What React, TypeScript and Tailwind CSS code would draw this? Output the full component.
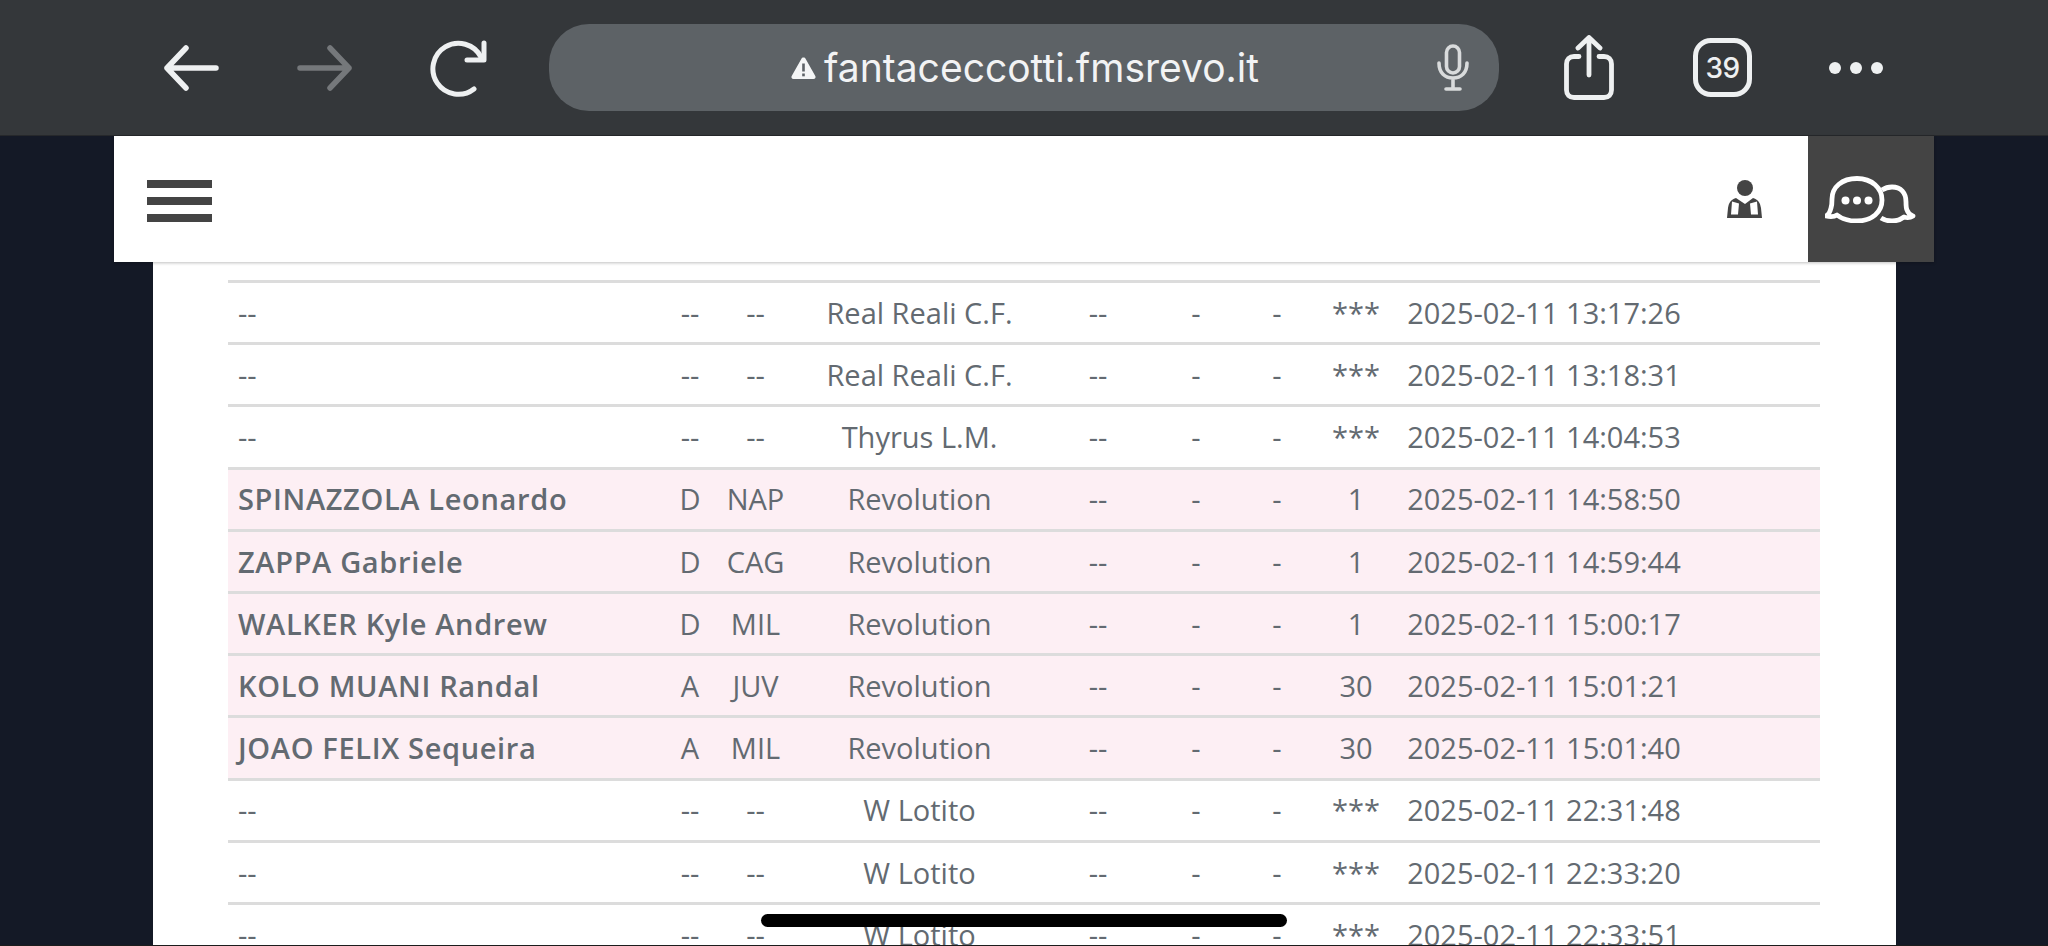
import React from "react";

const rows = [
  { name: "--", r: "--", club: "--", team: "Real Reali C.F.", cost: "***", at: "2025-02-11 13:17:26" },
  { name: "--", r: "--", club: "--", team: "Real Reali C.F.", cost: "***", at: "2025-02-11 13:18:31" },
  { name: "--", r: "--", club: "--", team: "Thyrus L.M.", cost: "***", at: "2025-02-11 14:04:53" },
  { name: "SPINAZZOLA Leonardo", r: "D", club: "NAP", team: "Revolution", cost: "1", at: "2025-02-11 14:58:50" },
  { name: "ZAPPA Gabriele", r: "D", club: "CAG", team: "Revolution", cost: "1", at: "2025-02-11 14:59:44" },
  { name: "WALKER Kyle Andrew", r: "D", club: "MIL", team: "Revolution", cost: "1", at: "2025-02-11 15:00:17" },
  { name: "KOLO MUANI Randal", r: "A", club: "JUV", team: "Revolution", cost: "30", at: "2025-02-11 15:01:21" },
  { name: "JOAO FELIX Sequeira", r: "A", club: "MIL", team: "Revolution", cost: "30", at: "2025-02-11 15:01:40" },
  { name: "--", r: "--", club: "--", team: "W Lotito", cost: "***", at: "2025-02-11 22:31:48" },
  { name: "--", r: "--", club: "--", team: "W Lotito", cost: "***", at: "2025-02-11 22:33:20" },
  { name: "--", r: "--", club: "--", team: "W Lotito", cost: "***", at: "2025-02-11 22:33:51" },
];

function BrowserBar() {
  return (
    <div className="h-[136px] shrink-0 flex items-center bg-[#34373a] border-b border-[#26282b] font-['Inter',sans-serif] text-[#eef0f1]">
      <svg className="ml-[163px] w-[56px] h-[46px]" viewBox="0 0 56 46" fill="none" stroke="#eef0f1" strokeWidth="5.5" strokeLinecap="round" strokeLinejoin="round">
        <path d="M53 23H4M23 3 4 23l19 20" />
      </svg>
      <svg className="ml-[78px] w-[56px] h-[46px]" viewBox="0 0 56 46" fill="none" stroke="#75787b" strokeWidth="5.5" strokeLinecap="round" strokeLinejoin="round">
        <path d="M3 23h49M33 3l19 20-19 20" />
      </svg>
      <svg className="ml-[77px] w-[60px] h-[60px]" viewBox="0 0 60 60" fill="none" stroke="#eef0f1" strokeWidth="5" strokeLinecap="round" strokeLinejoin="round">
        <path d="M44 51A25.500 25.500 0 1 1 51 19" />
        <path d="M54 5v17H37" />
      </svg>
      <div className="ml-[59px] w-[950px] h-[87px] rounded-[40px] bg-[#5d6266] flex items-center relative">
        <svg className="ml-[241px] w-[27px] h-[24px]" viewBox="0 0 27 24">
          <path d="M13.5 1.5c1 0 1.7.5 2.2 1.4l9.6 17c.8 1.4-.1 3.1-1.8 3.1H3.5c-1.7 0-2.6-1.7-1.8-3.1l9.6-17c.5-.9 1.2-1.4 2.2-1.4z" fill="#f4f5f6" />
          <rect x="12.2" y="7.5" width="2.6" height="8" fill="#5d6266" />
          <rect x="12.2" y="17.5" width="2.6" height="2.8" fill="#5d6266" />
        </svg>
        <span className="ml-[7px] text-[39px] leading-none text-[#f2f3f4]">fantaceccotti.fmsrevo.it</span>
        <svg className="absolute left-[888px] top-[20px] w-[32px] h-[47px]" viewBox="0 0 32 47" fill="none" stroke="#d9dbdc" strokeWidth="3.6" strokeLinecap="round">
          <rect x="9.500" y="2" width="13" height="27" rx="6.500" />
          <path d="M2 19c0 10 6 15 14 15s14-5 14-15M16 34v11M9 45h14" />
        </svg>
      </div>
      <svg className="ml-[65px] w-[50px] h-[65px]" viewBox="0 0 50 65" fill="none" stroke="#eef0f1" strokeWidth="4.8" strokeLinecap="round" strokeLinejoin="round">
        <path d="M25 40V3M14 13 25 2.500 36 13" />
        <path d="M15 21.500H10c-4.500 0-7.500 3-7.500 7.500v26c0 4.500 3 7.500 7.500 7.500h30c4.500 0 7.500-3 7.500-7.500V29c0-4.500-3-7.500-7.500-7.500h-5" />
      </svg>
      <div className="ml-[79px] w-[59px] h-[59px] rounded-[18px] border-[5px] border-[#eef0f1] flex items-center justify-center text-[28px] font-medium tracking-[-0.5px] leading-none">
        39
      </div>
      <div className="ml-[77px] flex gap-[9px]">
        <span className="w-[12px] h-[12px] rounded-full bg-[#eef0f1]" />
        <span className="w-[12px] h-[12px] rounded-full bg-[#eef0f1]" />
        <span className="w-[12px] h-[12px] rounded-full bg-[#eef0f1]" />
      </div>
    </div>
  );
}

function SiteNav() {
  return (
    <div className="relative z-10 h-[126px] bg-white flex items-center shadow-[0_1px_3px_rgba(0,0,0,0.25)]">
      <div className="ml-[33px] mt-[3px] w-[65px] flex flex-col gap-[9px]">
        <span className="h-[8px] bg-[#444444]" />
        <span className="h-[8px] bg-[#444444]" />
        <span className="h-[8px] bg-[#444444]" />
      </div>
      <svg className="ml-auto mr-[46px] w-[35px] h-[38px] mt-[-1px]" viewBox="0 0 35 38" fill="#444444">
        <circle cx="18" cy="8" r="8" />
        <path d="M9 18c-6 2-7 5-8 10l-1 10h35l-1-10c-1-5-2-8-8-10l-8 6z" />
        <path d="M5 21.500l-1 13h7l1-11zM30 21.500l1 13h-7l-1-11z" fill="#ffffff" />
      </svg>
      <div className="w-[126px] h-full bg-[#444444] flex items-center justify-center">
        <svg className="w-[93px] h-[47px]" viewBox="0 0 93 47" fill="none" stroke="#ffffff" strokeWidth="4.8" strokeLinejoin="round">
          <path d="M57 14c3-2 7-3 10-3 9 0 14 6 14 15 0 3 0 6 1 8 1 3 3 5 6 6-3 2-6 2-9 1-4 3-7 4-12 4-5 0-8-1-11-3" />
          <path d="M32 2.500C17 2.500 7 11 7 23c0 3 0 6-1 9-1 4-3 7-5 8 4 1 8 1 11-1 5 4 12 6 20 6 15 0 25-9 25-21S47 2.500 32 2.500z" fill="#444444" />
          <circle cx="20.500" cy="24.500" r="4" fill="#ffffff" stroke="none" />
          <circle cx="32" cy="24.500" r="4" fill="#ffffff" stroke="none" />
          <circle cx="43.500" cy="24.500" r="4" fill="#ffffff" stroke="none" />
        </svg>
      </div>
    </div>
  );
}

export default function App() {
  return (
    <div className="relative h-[946px] overflow-hidden bg-[#141926] flex flex-col border-b border-[#1c1c1c]">
      <BrowserBar />
      <div className="ml-[114px] w-[1820px] flex-1 min-h-0 flex flex-col">
        <SiteNav />
        <div className="ml-[39px] w-[1743px] flex-1 min-h-0 bg-white pl-[75px] pt-[18px] overflow-hidden">
          <table className="table-fixed w-[1592px] border-separate border-spacing-0 font-['Open_Sans',sans-serif] text-[29px] text-[#636a71] [&_td]:border-t-[3px] [&_td]:border-[#dcdcdc] [&_td]:h-[62.2px]">
            <colgroup>
              <col className="w-[430px]" />
              <col className="w-[64px]" />
              <col className="w-[67px]" />
              <col className="w-[261px]" />
              <col className="w-[96px]" />
              <col className="w-[100px]" />
              <col className="w-[62px]" />
              <col className="w-[96px]" />
              <col className="w-[280px]" />
              <col />
            </colgroup>
            <tbody>
              {rows.map((row) => {
                const picked = row.name !== "--";
                return (
                  <tr key={row.at} className={picked ? "bg-[#fdeff4]" : ""}>
                    <td className={`pl-[10px] whitespace-nowrap ${picked ? "font-semibold tracking-[0.65px]" : ""}`}>{row.name}</td>
                    <td className="text-center">{row.r}</td>
                    <td className="text-center">{row.club}</td>
                    <td className="text-center">{row.team}</td>
                    <td className="text-center">--</td>
                    <td className="text-center">-</td>
                    <td className="text-center">-</td>
                    <td className="text-center">{row.cost}</td>
                    <td className="text-center whitespace-nowrap">{row.at}</td>
                    <td />
                  </tr>
                );
              })}
            </tbody>
          </table>
        </div>
      </div>
      <div className="absolute left-[761px] top-[914px] w-[526px] h-[13px] rounded-full bg-black" />
    </div>
  );
}
